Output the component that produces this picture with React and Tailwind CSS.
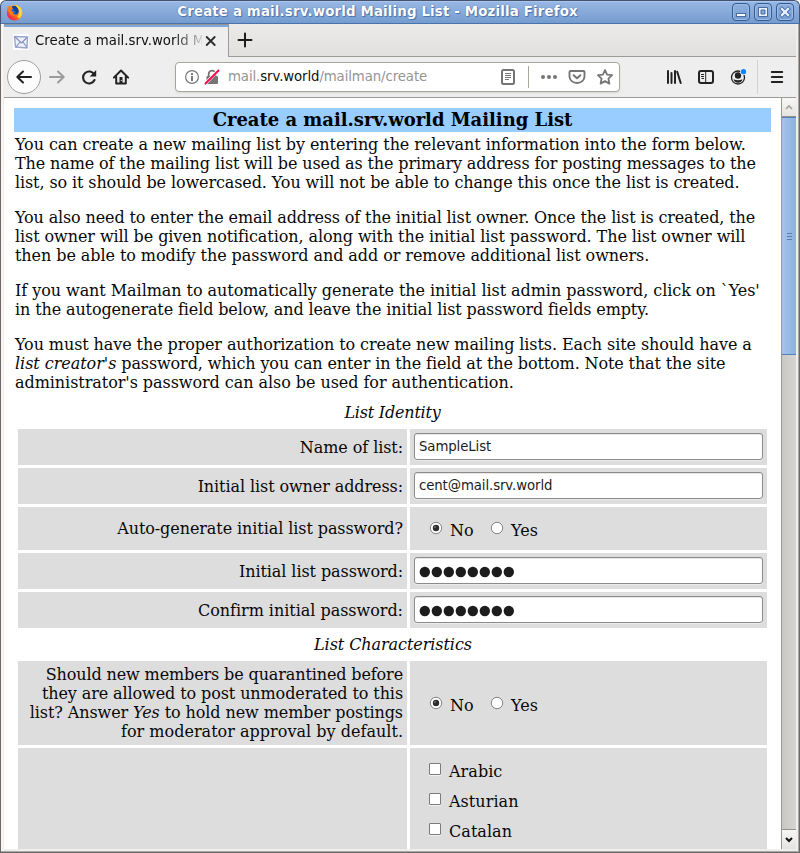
import React from "react";

const sans = "font-['DejaVu_Sans',sans-serif]";

function FirefoxLogo() {
  return (
    <svg width="17" height="17" viewBox="0 0 17 17" className="ml-[5px] mt-px shrink-0">
      <defs>
        <linearGradient id="fox" x1="1" y1="0" x2="0.1" y2="0.9">
          <stop offset="0" stopColor="#ffe23a" />
          <stop offset="0.4" stopColor="#ffa81c" />
          <stop offset="0.7" stopColor="#ff5a22" />
          <stop offset="1" stopColor="#ec1260" />
        </linearGradient>
      </defs>
      <circle cx="8.6" cy="8.7" r="7.8" fill="url(#fox)" />
      <circle cx="8.4" cy="7.2" r="4.400" fill="#1566c8" />
      <path d="M5.500 2.500C8 .9 11 1.500 12 4.500c.8 3-.4 6-3.400 7 1-1.500 1.400-3 .8-4.300z" fill="#123f9c" />
      <path d="M9.500.9c3 .8 5.200 2.600 6.200 5.300.8 3-.2 6.300-2.200 8.200l-2.200-1.600c2-2 2.400-4.800 1.400-7.200z" fill="#ffd633" />
      <path d="M1 5.500C1.400 3.500 2.200 2.200 3.200 1.600c0 1.100.5 1.800 1.500 2 1 .1 1.700.3 2.300.8L5.400 6l.7 1.500 2.400.5-1.700 1.300c.8 1.500 3 1.300 4.200.4-.8 2.400-4.300 3.200-6.500 1z" fill="#ff7a1a" />
    </svg>
  );
}

function WinButton({ children }) {
  return (
    <span className="flex size-[18px] items-center justify-center rounded-[4px] border border-[#365b91] bg-linear-to-b from-[#8fb1df] to-[#769dd1] shadow-[inset_0_0_0_1px_#9dbce7]">
      {children}
    </span>
  );
}

function TitleBar() {
  return (
    <div className="flex h-6 shrink-0 items-center rounded-t-[6px] border-x border-t border-b border-[#46536f] border-b-[#4a72ab] bg-linear-to-b from-[#98b8e5] to-[#769ccf] shadow-[inset_0_1px_0_#abc6ec]">
      <FirefoxLogo />
      <div className={"flex-1 text-center text-[13.33px] leading-6 font-bold tracking-[0.17px] whitespace-nowrap text-white [text-shadow:0_0_1px_#3c639b,1px_1px_1px_#4a72ac] " + sans}>
        <span>Create a mail.srv.world Mailing List - Mozilla Firefox</span>
      </div>
      <div className="mr-[5px] flex gap-1">
        <WinButton>
          <svg width="12" height="12"><rect x="1.500" y="7.500" width="9" height="3" fill="#fff" stroke="#466ca3" /></svg>
        </WinButton>
        <WinButton>
          <svg width="12" height="12"><path d="M1.500 1.500h9v9h-9zM4 4v4h4V4z" fill="#e9f1ff" fillRule="evenodd" stroke="#466ca3" /></svg>
        </WinButton>
        <WinButton>
          <svg width="12" height="12"><path d="M3 3l6 6M9 3L3 9" stroke="#466ca3" strokeWidth="4" strokeLinecap="square" /><path d="M3 3l6 6M9 3L3 9" stroke="#e9f1ff" strokeWidth="2.300" strokeLinecap="square" /></svg>
        </WinButton>
      </div>
    </div>
  );
}

function TabStrip() {
  return (
    <div className="flex h-[33px] shrink-0 bg-linear-to-b from-[#ebeae9] to-[#e1e0de]">
      <div className="flex w-[225px] items-center border-t border-r border-t-[#98948f] border-r-[#9d9b97] bg-[#eeeeee] shadow-[inset_0_2px_0_#7fa8dc]">
        <svg width="16" height="16" className="ml-[9px] mt-px shrink-0">
          <rect width="16" height="16" fill="#fff" />
          <path d="M1.500 2.500l13 .5-.5 11-11.500-1z" fill="#eef1fb" stroke="#9aa6cc" strokeWidth="1.400" />
          <path d="M2 3l6.500 6L14 3.500M3 13l4-5M14 13.500L10 8" fill="none" stroke="#7f8fbd" strokeWidth="1.100" />
        </svg>
        <div className={"ml-[6px] w-[167px] overflow-hidden text-[13.3px] leading-5 whitespace-nowrap text-[#111] [mask-image:linear-gradient(to_right,black_138px,transparent_172px)] " + sans}>
          <span>Create a mail.srv.world Mailing List</span>
        </div>
        <svg width="12" height="12" viewBox="0 0 12 12" className="ml-[3px] shrink-0"><path d="M1.700 2l8 8M9.700 2l-8 8" stroke="#2a2a2a" strokeWidth="1.800" strokeLinecap="round" /></svg>
      </div>
      <div className="flex flex-1 items-center border-b border-[#9d9b97]">
        <svg width="16" height="16" className="ml-[8px]"><path d="M8 1.500v13M1.500 8h13" stroke="#1c1c1c" strokeWidth="2" strokeLinecap="round" /></svg>
      </div>
    </div>
  );
}

function NavBar() {
  return (
    <div className="flex h-[41px] shrink-0 items-center border-b border-[#9d9b97] bg-[#eeeeee]">
      <div className="ml-[3px] flex size-[34px] shrink-0 items-center justify-center rounded-full border border-[#a09f9c] bg-[#fcfcfc]">
        <svg width="18" height="16"><path d="M16 8H2.500M8 2.500L2.300 8 8 13.500" fill="none" stroke="#222" strokeWidth="2" strokeLinecap="round" strokeLinejoin="round" /></svg>
      </div>
      <svg width="18" height="16" className="ml-[7px] shrink-0"><path d="M2 8h13.500M10 2.500L15.700 8 10 13.500" fill="none" stroke="#9b9b9b" strokeWidth="2" strokeLinecap="round" strokeLinejoin="round" /></svg>
      <svg width="16" height="16" className="ml-[15px] shrink-0"><path d="M13.300 5.500A6 6 0 1 0 13.500 11" fill="none" stroke="#222" strokeWidth="2.100" strokeLinecap="round" /><path d="M15.200 1v6.500H8.700z" fill="#222" /></svg>
      <svg width="16" height="16" className="ml-[16px] shrink-0"><path d="M.8 8.600L8 1.500l7.200 7.100M3.200 7.800v6.700h9.600V7.800" fill="none" stroke="#222" strokeWidth="2" strokeLinecap="round" strokeLinejoin="round" /><path d="M6.500 8h3v6h-3z" fill="#222" /><path d="M7.800 11h1v1h-1z" fill="#eee" /></svg>

      <div className="ml-[46px] flex h-[30px] w-[445px] shrink-0 items-center rounded-[4px] border border-[#a9a69e] bg-white shadow-[0_1px_2px_rgba(0,0,0,.1)]">
        <svg width="16" height="16" className="ml-[8px] shrink-0"><circle cx="8" cy="8" r="6.400" fill="none" stroke="#777" strokeWidth="1.200" /><path d="M7 4h2v2H7zM7 7h2v5H7z" fill="#777" /></svg>
        <svg width="16" height="16" className="ml-[4px] shrink-0"><path d="M4.700 7V5a3.300 3.300 0 0 1 6.600 0v2" fill="none" stroke="#757575" strokeWidth="1.800" /><rect x="2.500" y="7" width="11.500" height="8" rx="1" fill="#757575" /><path d="M1 15L14.500 1" stroke="#fff" strokeWidth="3.200" /><path d="M1.500 14.500L14.500 1.500" stroke="#f4094b" strokeWidth="2" strokeLinecap="round" /></svg>
        <div className={"ml-[8px] w-[272px] shrink-0 text-[13.3px] leading-5 tracking-[-0.1px] whitespace-nowrap text-[#949494] " + sans}>
          <span>mail.<span className="text-[#111]">srv.world</span>/mailman/create</span>
        </div>
        <svg width="16" height="16" className="shrink-0"><rect x="2" y="1" width="12" height="14" rx="1.500" fill="none" stroke="#757575" strokeWidth="2" /><path d="M5 4.500h6M5 6.500h6M5 8.500h6M5 10.500h4" stroke="#757575" /></svg>
        <div className="ml-[12px] h-[22px] w-px bg-[#aaa79f]" />
        <svg width="18" height="16" className="ml-[11px] shrink-0" fill="#757575"><circle cx="3" cy="8" r="2" /><circle cx="9" cy="8" r="2" /><circle cx="15" cy="8" r="2" /></svg>
        <svg width="18" height="16" className="ml-[10px] shrink-0" fill="none" stroke="#757575" strokeLinecap="round" strokeLinejoin="round"><path d="M2.500 2h13q1 0 1 1v4.500a7.500 6.500 0 0 1-15 0V3q0-1 1-1z" strokeWidth="1.900" /><path d="M5.600 6.200L9 9.300l3.400-3.100" strokeWidth="2" /></svg>
        <svg width="18" height="18" className="ml-[10px] shrink-0"><path d="M9 2l2.100 4.600 5 .6-3.700 3.400 1 5L9 13.100l-4.400 2.500 1-5L1.900 7.200l5-.6z" fill="none" stroke="#757575" strokeWidth="1.800" strokeLinejoin="round" /></svg>
      </div>

      <svg width="16" height="16" className="ml-[46px] shrink-0"><path d="M2 2v12M5.500 4v10M9 2v12" stroke="#222" strokeWidth="2" strokeLinecap="round" /><path d="M11.200 2.800L14.700 14" stroke="#222" strokeWidth="2" strokeLinecap="round" /></svg>
      <svg width="16" height="16" className="ml-[16px] shrink-0"><rect x="1" y="2" width="14" height="12" rx="2" fill="none" stroke="#222" strokeWidth="2" /><path d="M7.700 2v12" stroke="#222" /><path d="M3 5.500h3M3 7.500h3M3.500 9.500H6" stroke="#222" /></svg>
      <svg width="18" height="18" className="ml-[15px] shrink-0"><circle cx="9" cy="9.500" r="6.500" fill="none" stroke="#222" strokeWidth="1.300" /><circle cx="9" cy="7.500" r="3.200" fill="#222" /><path d="M4.500 11.300q4.500 2 9 0-.8 3.400-4.500 3.400t-4.500-3.400z" fill="#222" /><circle cx="14.500" cy="3.700" r="3.400" fill="#eee" /><circle cx="14.500" cy="3.700" r="2.600" fill="#0a84ff" /></svg>
      <div className="ml-[10px] h-[34px] w-px bg-[#d2d2d2]" />
      <svg width="14" height="14" className="ml-[12px] shrink-0"><path d="M1.800 2h10.400M1.800 7h10.400M1.800 12h10.400" stroke="#222" strokeWidth="2" strokeLinecap="round" /></svg>
    </div>
  );
}

function FormRow({ label, height, children, top = false }) {
  return (
    <div className={"grid grid-cols-[389px_357px] gap-[3px] " + height}>
      <div className="flex items-center justify-end bg-[#dddddd] pr-1 text-right whitespace-nowrap">
        <div>{label}</div>
      </div>
      <div className={"flex bg-[#dddddd] " + (top ? "items-start" : "items-center")}>{children}</div>
    </div>
  );
}

function Field({ value, dots = false }) {
  return (
    <div className={"mb-px ml-[4px] flex h-[27px] w-[349px] items-center rounded-[3px] border border-[#8d8b88] bg-white pl-[4px] whitespace-nowrap text-[#1c1c1c] shadow-[inset_0_1px_0_#e8e7e5,0_1px_0_#ebebeb] " + sans}>
      {dots ? (
        <svg width="98" height="14" fill="#1c1c1c" className="mt-[3px]">
          {[0, 1, 2, 3, 4, 5, 6, 7].map((n) => <circle key={n} cx={5.8 + n * 12} cy="7" r="5.200" />)}
        </svg>
      ) : <span className="mt-px text-[13.3px] leading-5 tracking-[-0.1px]">{value}</span>}
    </div>
  );
}

function Radio({ on = false }) {
  return (
    <svg width="14" height="14" className="mt-px shrink-0">
      <circle cx="7" cy="7" r="5.700" fill="#fff" stroke="#858480" />
      {on && <circle cx="7" cy="7" r="3.200" fill="#2d2d2d" />}
      {on && <circle cx="6" cy="6" r=".9" fill="#777" />}
    </svg>
  );
}

function YesNo() {
  return (
    <div className="mt-[3px] flex pl-[19px] leading-[19px]">
      <Radio on />
      <span className="mt-px ml-[7px] w-[40px]">No</span>
      <Radio />
      <span className="mt-px ml-[7px]">Yes</span>
    </div>
  );
}

function Page() {
  return (
    <div className="w-[777px] overflow-hidden bg-white pt-[10px] font-['DejaVu_Serif',serif] text-[16px] leading-[19px] text-[#080808]">
      <div className="mr-[10px] ml-[10px] h-6 bg-[#99ccff] text-center text-[18px] leading-6 font-bold tracking-[-0.03px] text-black"><span>Create a mail.srv.world Mailing List</span></div>
      <div className="mt-[3px] ml-[11px] flex flex-col gap-4 whitespace-nowrap">
        <p>
          <span className="tracking-[-0.08px]">You can create a new mailing list by entering the relevant information into the form below.</span><br />
          <span className="tracking-[-0.118px]">The name of the mailing list will be used as the primary address for posting messages to the</span><br />
          <span className="tracking-[-0.108px]">list, so it should be lowercased. You will not be able to change this once the list is created.</span>
        </p>
        <p>
          <span className="tracking-[-0.134px]">You also need to enter the email address of the initial list owner. Once the list is created, the</span><br />
          <span className="tracking-[-0.082px]">list owner will be given notification, along with the initial list password. The list owner will</span><br />
          <span className="tracking-[-0.07px]">then be able to modify the password and add or remove additional list owners.</span>
        </p>
        <p>
          <span className="tracking-[-0.056px]">If you want Mailman to automatically generate the initial list admin password, click on `Yes'</span><br />
          <span className="tracking-[-0.119px]">in the autogenerate field below, and leave the initial list password fields empty.</span>
        </p>
        <p>
          <span className="tracking-[-0.087px]">You must have the proper authorization to create new mailing lists. Each site should have a</span><br />
          <span className="tracking-[-0.12px]"><i className="tracking-[-0.04px]">list creator's</i> password, which you can enter in the field at the bottom. Note that the site</span><br />
          <span className="tracking-[-0.056px]">administrator's password can also be used for authentication.</span>
        </p>
      </div>
      <div className="ml-[14px] flex w-[749px] flex-col gap-[3px]">
        <div className="mt-[11px] h-[23px] text-center tracking-[-0.2px] italic">List Identity</div>
        <FormRow height="h-9" label={<span className="tracking-[-0.08px]">Name of list:</span>}><Field value="SampleList" /></FormRow>
        <FormRow height="h-9" label={<span className="tracking-[-0.09px]">Initial list owner address:</span>}><Field value="cent@mail.srv.world" /></FormRow>
        <FormRow height="h-[43px]" label={<span className="tracking-[-0.083px]">Auto-generate initial list password?</span>}><YesNo /></FormRow>
        <FormRow height="h-9" label={<span className="tracking-[-0.08px]">Initial list password:</span>}><Field dots /></FormRow>
        <FormRow height="h-9" label={<span className="tracking-[-0.03px]">Confirm initial password:</span>}><Field dots /></FormRow>
        <div className="mt-[4px] h-[23px] pl-px text-center tracking-[-0.07px] italic">List Characteristics</div>
        <FormRow
          height="h-[84px]"
          label={
            <>
              <span className="tracking-[-0.12px]">Should new members be quarantined before</span><br />
              <span className="tracking-[-0.1px]">they are allowed to post unmoderated to this</span><br />
              <span className="tracking-[-0.09px]">list? Answer <i>Yes</i> to hold new member postings</span><br />
              <span className="tracking-[0.02px]">for moderator approval by default.</span>
            </>
          }
        >
          <YesNo />
        </FormRow>
        <FormRow height="h-[110px]" label="" top>
          <div className="mt-[14px] ml-[19px] flex flex-col gap-[11px]">
            {["Arabic", "Asturian", "Catalan"].map((name) => (
              <div key={name} className="flex h-[19px]">
                <span className="mt-px size-3 rounded-[1px] border border-[#7d7b77] bg-white shadow-[0_1px_0_#f3f3f3]" />
                <span className="ml-[8px] tracking-[0.05px]">{name}</span>
              </div>
            ))}
          </div>
        </FormRow>
      </div>
    </div>
  );
}

function ScrollBar() {
  return (
    <div className="flex w-[15px] flex-col border-l border-[#9a9894] bg-linear-to-r from-[#c9c8c5] to-[#d5d4d2]">
      <div className="flex h-[19px] items-center justify-center border-b border-[#93918c] bg-linear-to-b from-[#f7f7f6] to-[#e4e3e1]">
        <svg width="8" height="6"><path d="M1 5l3-3 3 3" fill="none" stroke="#a5a39e" strokeWidth="1.600" /></svg>
      </div>
      <div className="flex h-[238px] flex-col items-center justify-center gap-[2px] border-y border-[#557fb9] bg-linear-to-r from-[#a5c3ec] to-[#8cb0e0]">
        <span className="h-px w-[5px] bg-[#5f7ca7]" />
        <span className="h-px w-[5px] bg-[#5f7ca7]" />
        <span className="h-px w-[5px] bg-[#5f7ca7]" />
      </div>
      <div className="flex-1" />
      <div className="flex h-5 items-center justify-center border-t border-[#93918c] bg-linear-to-b from-[#f7f7f6] to-[#e4e3e1]">
        <svg width="8" height="6"><path d="M1 1l3 3 3-3" fill="none" stroke="#111" strokeWidth="2" /></svg>
      </div>
    </div>
  );
}

export default function App() {
  return (
    <div className="flex h-[853px] w-[800px] flex-col overflow-hidden bg-white">
      <TitleBar />
      <div className="flex min-h-0 flex-1 flex-col border-x border-b border-[#6a6766] bg-[#eeeeec] pr-[3px] pb-[3px] pl-[3px] shadow-[inset_-1px_-1px_0_#aaa8a5,inset_2px_0_0_#f8f6f5]">
        <TabStrip />
        <NavBar />
        <div className="flex min-h-0 flex-1 overflow-hidden">
          <Page />
          <ScrollBar />
        </div>
      </div>
    </div>
  );
}
